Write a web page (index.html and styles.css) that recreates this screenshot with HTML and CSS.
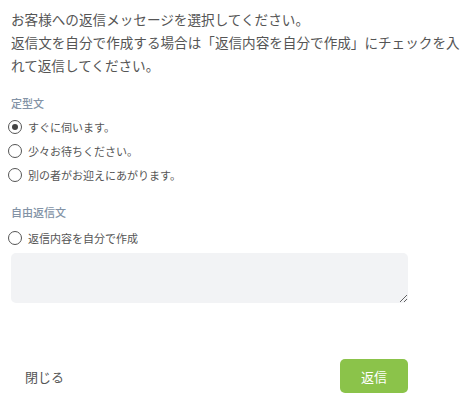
FILE: index.html
```html
<!DOCTYPE html>
<html lang="ja">
<head>
<meta charset="utf-8">
<link rel="stylesheet" href="styles.css">
</head>
<body>
<div class="dialog">
  <p class="intro">お客様への返信メッセージを選択してください。<br>返信文を自分で作成する場合は「返信内容を自分で作成」にチェックを入れて返信してください。</p>
  <div class="form">
    <div class="label first">定型文</div>
    <label class="option"><input type="radio" name="msg" checked><span>すぐに伺います。</span></label>
    <label class="option"><input type="radio" name="msg"><span>少々お待ちください。</span></label>
    <label class="option"><input type="radio" name="msg"><span>別の者がお迎えにあがります。</span></label>
    <div class="label second">自由返信文</div>
    <label class="option"><input type="radio" name="msg"><span>返信内容を自分で作成</span></label>
    <textarea class="free"></textarea>
    <div class="footer">
      <button class="close">閉じる</button>
      <button class="send">返信</button>
    </div>
  </div>
</div>
</body>
</html>
```
FILE: styles.css
```css
html, body {
  margin: 0;
  padding: 0;
  background: #fff;
}
body {
  font-family: "Noto Sans CJK JP", "Noto Sans", sans-serif;
  color: #555;
}
.dialog {
  padding: 8px 8px 0 11px;
}
.intro {
  margin: 0;
  font-size: 13.6px;
  line-height: 23px;
  color: #555;
}
.form {
  width: 397px;
  display: flex;
  flex-direction: column;
}
.label {
  font-size: 11px;
  line-height: 16px;
  font-weight: 500;
  color: #8393a6;
}
.label.first {
  margin-top: 18px;
  margin-bottom: 4px;
}
.label.second {
  margin-top: 17px;
  margin-bottom: 6px;
}
.option {
  display: flex;
  align-items: center;
  height: 24px;
  font-size: 11px;
  color: #555;
  margin-left: -3px;
}
.option input {
  appearance: none;
  -webkit-appearance: none;
  width: 14px;
  height: 14px;
  margin: 0 6px 0 0;
  border: 1px solid #555;
  border-radius: 50%;
  display: grid;
  place-content: center;
  box-sizing: border-box;
}
.option input:checked::before {
  content: "";
  width: 6px;
  height: 6px;
  border-radius: 50%;
  background: #444;
}
.free {
  margin-top: 3px;
  height: 50px;
  width: 100%;
  box-sizing: border-box;
  border: none;
  border-radius: 5px;
  background: #f2f3f5;
  resize: vertical;
  outline: none;
}
.footer {
  margin-top: 56px;
  display: flex;
  justify-content: space-between;
  align-items: center;
}
.footer button {
  font-family: "Noto Sans CJK JP", "Noto Sans", sans-serif;
  font-size: 13px;
  border: none;
  cursor: pointer;
}
.close {
  background: none;
  color: #555;
  padding: 0 0 0 14px;
}
.send {
  width: 68px;
  height: 34px;
  border-radius: 5px;
  background: #8bc34a;
  color: #fff;
}
```
